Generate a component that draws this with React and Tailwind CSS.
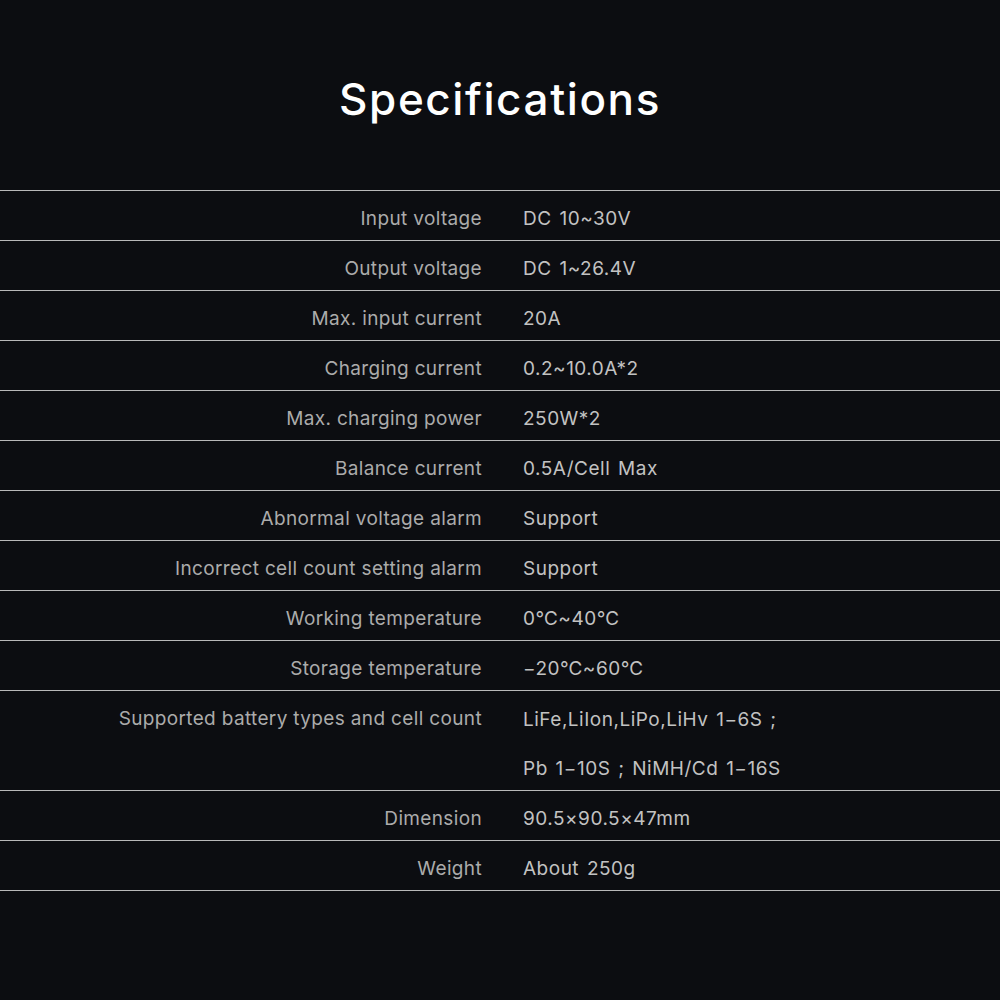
const specs = [
  ["Input voltage", ["DC 10~30V"]],
  ["Output voltage", ["DC 1~26.4V"]],
  ["Max. input current", ["20A"]],
  ["Charging current", ["0.2~10.0A*2"]],
  ["Max. charging power", ["250W*2"]],
  ["Balance current", ["0.5A/Cell Max"]],
  ["Abnormal voltage alarm", ["Support"]],
  ["Incorrect cell count setting alarm", ["Support"]],
  ["Working temperature", ["0℃~40℃"]],
  ["Storage temperature", ["−20℃~60℃"]],
  [
    "Supported battery types and cell count",
    ["LiFe,LiIon,LiPo,LiHv 1−6S ;", "Pb 1−10S ; NiMH/Cd 1−16S"],
  ],
  ["Dimension", ["90.5×90.5×47mm"]],
  ["Weight", ["About 250g"]],
];

export default function App() {
  return (
    <div className="w-[1000px] h-[1000px] bg-[#0c0d11] font-['Inter','Noto_Sans',sans-serif]">
      <div className="h-[190px] flex items-center justify-center pt-[8px]">
        <h1 className="text-[44px] font-medium text-white tracking-[1.6px]">
          Specifications
        </h1>
      </div>
      <div className="border-t border-[#b9b9b9]">
        {specs.map(([label, values]) => (
          <div key={label} className="flex border-b border-[#b9b9b9]">
            <div className="w-[482px] h-[49px] flex items-center justify-end text-[19px] tracking-[0.35px] text-[#ababab] pt-[8px]">
              {label}
            </div>
            <div className="flex flex-col pl-[41px]">
              {values.map((v) => (
                <div
                  key={v}
                  className="h-[50px] last:h-[49px] flex items-center text-[19px] tracking-[0.5px] [word-spacing:2px] text-[#c2c2c2] pt-[8px]"
                >
                  {v}
                </div>
              ))}
            </div>
          </div>
        ))}
      </div>
    </div>
  );
}
